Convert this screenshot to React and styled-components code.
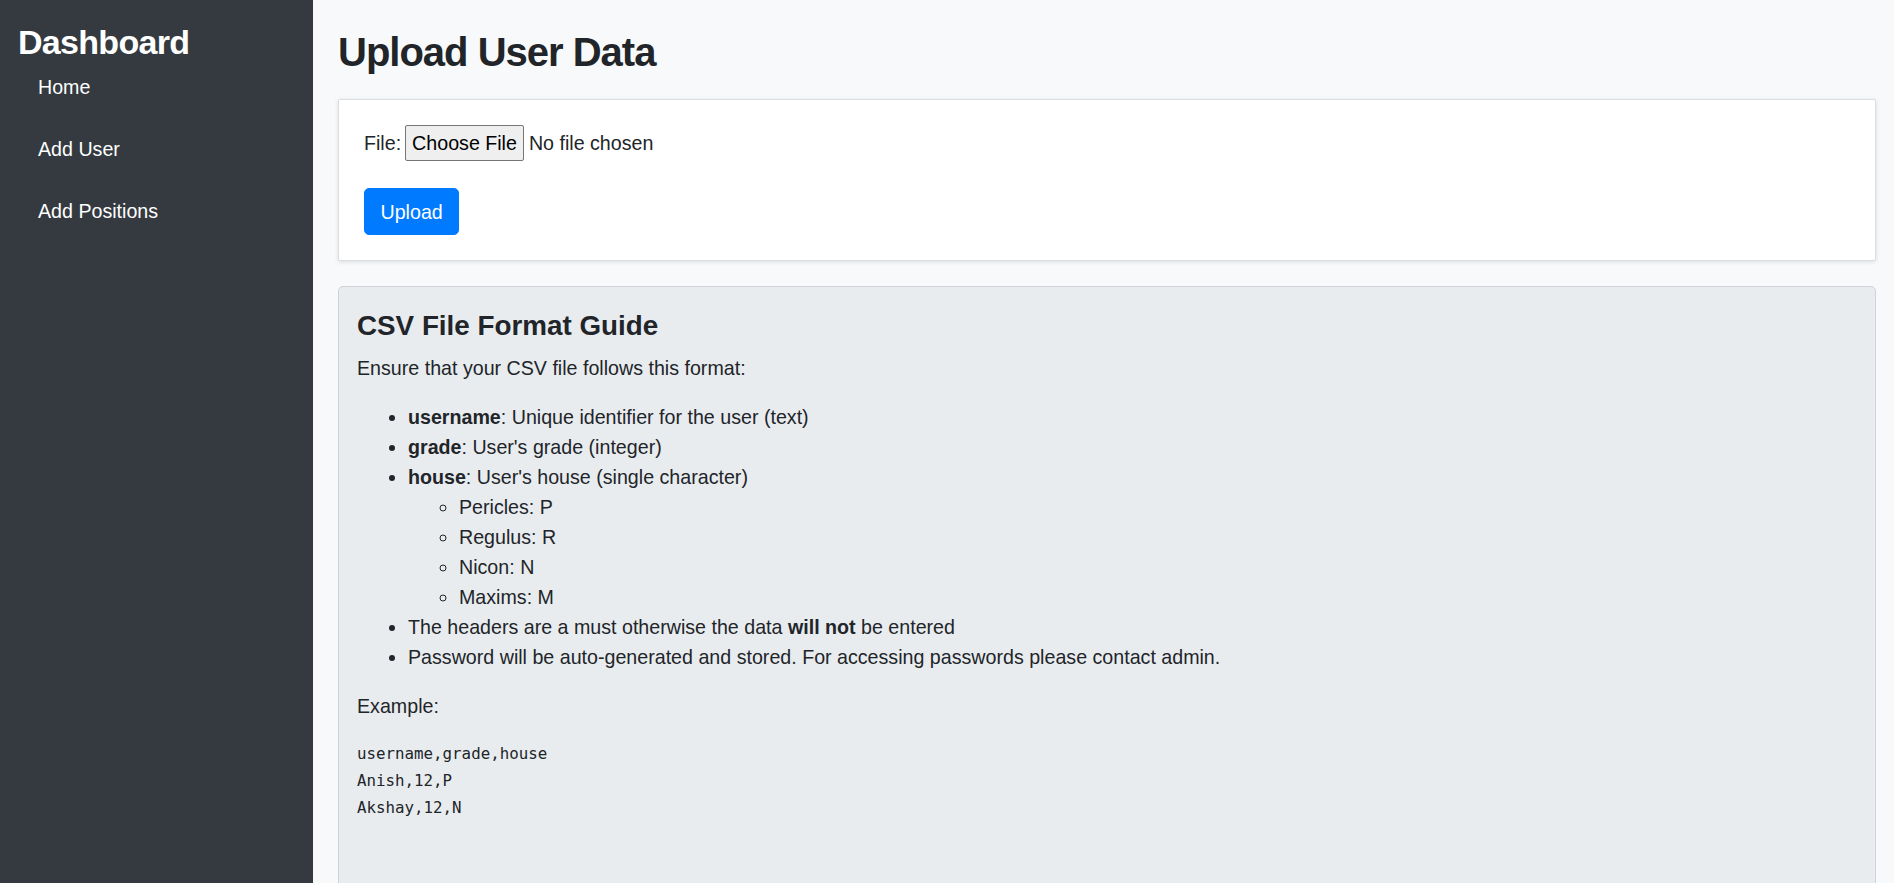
import React from 'react';
import styled, { createGlobalStyle } from 'styled-components';

const GlobalStyle = createGlobalStyle`
  html,
  body {
    margin: 0;
    padding: 0;
  }

  body {
    font-family: 'Liberation Sans', Arial, sans-serif;
    font-size: 19.65px;
    line-height: 30px;
    color: #212529;
    background-color: #f8f9fa;
  }

  * {
    box-sizing: border-box;
  }
`;

const Layout = styled.div`
  display: flex;
  min-height: 100vh;
`;

const Sidebar = styled.aside`
  flex: 0 0 313px;
  width: 313px;
  padding: 25px 18px;
  background-color: #343a40;
  color: #fff;
`;

const Brand = styled.h2`
  margin: 0;
  font-size: 34px;
  line-height: 34px;
  font-weight: 700;
  letter-spacing: -0.7px;
`;

const NavList = styled.ul`
  margin: 0;
  padding: 0;
  list-style: none;
`;

const NavLink = styled.a`
  display: block;
  padding: 13px 0 19px 20px;
  color: #fff;
  text-decoration: none;
`;

const Main = styled.main`
  flex: 1;
  min-width: 0;
  padding: 28px 18px 0 25px;
  overflow: hidden;
`;

const PageTitle = styled.h1`
  margin: 0 0 23px;
  font-size: 40px;
  line-height: 48px;
  font-weight: 700;
  letter-spacing: -1px;
`;

const UploadCard = styled.form`
  padding: 25px;
  background-color: #fff;
  border: 1px solid #dcdfe2;
  border-radius: 2px;
  box-shadow: 0 1px 4px rgba(0, 0, 0, 0.12);
`;

const FieldRow = styled.div`
  display: flex;
  align-items: center;
  gap: 4px;
  height: 36px;
  margin-bottom: 27px;
`;

const FileInput = styled.input`
  font: inherit;
  color: #212529;

  &::file-selector-button {
    height: 36px;
    margin-right: 5px;
    padding: 0 6px;
    font: inherit;
    color: #000;
    background-color: #efefef;
    border: 1px solid #767676;
    border-radius: 2px;
  }
`;

const PrimaryButton = styled.button`
  display: block;
  padding: 7.5px 15.5px;
  font: inherit;
  line-height: 30px;
  color: #fff;
  background-color: #007bff;
  border: 1px solid #007bff;
  border-radius: 5px;
`;

const GuideCard = styled.section`
  margin-top: 25px;
  padding: 22px 18px 90px;
  background-color: #e9ecef;
  border: 1px solid #cfd3d7;
  border-radius: 5px;
`;

const GuideTitle = styled.h4`
  margin: 0 0 11px;
  font-size: 27.8px;
  line-height: 33px;
  font-weight: 700;
`;

const Text = styled.p`
  margin: 0 0 ${(p) => p.gap || 19}px;
`;

const BulletList = styled.ul`
  margin: 0 0 ${(p) => (p.nested ? 0 : 19)}px;
  padding-left: 51px;
  list-style-type: ${(p) => (p.nested ? 'circle' : 'disc')};
`;

const CodeBlock = styled.pre`
  margin: 0;
  font-family: 'DejaVu Sans Mono', 'Liberation Mono', monospace;
  font-size: 15.8px;
  line-height: 27px;
`;

const houses = [
  ['Pericles', 'P'],
  ['Regulus', 'R'],
  ['Nicon', 'N'],
  ['Maxims', 'M'],
];

const App = () => (
  <>
    <GlobalStyle />
    <Layout>
      <Sidebar>
        <Brand>Dashboard</Brand>
        <NavList>
          <li>
            <NavLink href="#">Home</NavLink>
          </li>
          <li>
            <NavLink href="#">Add User</NavLink>
          </li>
          <li>
            <NavLink href="#">Add Positions</NavLink>
          </li>
        </NavList>
      </Sidebar>
      <Main>
        <PageTitle>Upload User Data</PageTitle>
        <UploadCard onSubmit={(e) => e.preventDefault()}>
          <FieldRow>
            <label htmlFor="csv">File:</label>
            <FileInput id="csv" type="file" accept=".csv" />
          </FieldRow>
          <PrimaryButton type="submit">Upload</PrimaryButton>
        </UploadCard>
        <GuideCard>
          <GuideTitle>CSV File Format Guide</GuideTitle>
          <Text>Ensure that your CSV file follows this format:</Text>
          <BulletList>
            <li>
              <strong>username</strong>: Unique identifier for the user (text)
            </li>
            <li>
              <strong>grade</strong>: User's grade (integer)
            </li>
            <li>
              <strong>house</strong>: User's house (single character)
              <BulletList nested>
                {houses.map(([name, code]) => (
                  <li key={code}>
                    {name}: {code}
                  </li>
                ))}
              </BulletList>
            </li>
            <li>
              The headers are a must otherwise the data <strong>will not</strong> be entered
            </li>
            <li>Password will be auto-generated and stored. For accessing passwords please contact admin.</li>
          </BulletList>
          <Text gap={19}>Example:</Text>
          <CodeBlock>{'username,grade,house\nAnish,12,P\nAkshay,12,N'}</CodeBlock>
        </GuideCard>
      </Main>
    </Layout>
  </>
);

export default App;
